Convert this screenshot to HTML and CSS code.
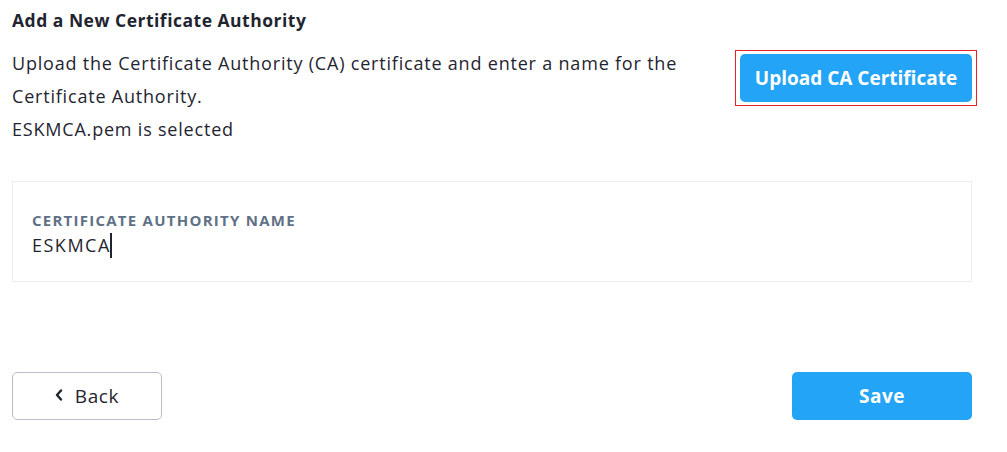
FILE: index.html
```html
<!DOCTYPE html>
<html>
<head>
<meta charset="utf-8">
<link rel="stylesheet" href="styles.css">
</head>
<body>
<div class="page">
  <h1 class="title">Add a New Certificate Authority</h1>
  <div class="intro">
    <div class="intro-text">
      <p>Upload the Certificate Authority (CA) certificate and enter a name for the Certificate Authority.</p>
      <p>ESKMCA.pem is selected</p>
    </div>
    <div class="focus-ring">
      <button class="btn btn-primary upload">Upload CA Certificate</button>
    </div>
  </div>
  <div class="card">
    <label class="field-label">CERTIFICATE AUTHORITY NAME</label>
    <div class="field-value">ESKMCA<span class="caret"></span></div>
  </div>
  <div class="actions">
    <button class="btn btn-back"><svg class="chev" viewBox="0 0 8 12" width="8" height="12"><path d="M6 1.5 L2 6 L6 10.5" fill="none" stroke="#1f2530" stroke-width="2.4" stroke-linecap="round" stroke-linejoin="round"/></svg>Back</button>
    <button class="btn btn-primary save">Save</button>
  </div>
</div>
</body>
</html>
```
FILE: styles.css
```css
* { box-sizing: border-box; }
html, body { margin: 0; padding: 0; background: #fff; }
body {
  font-family: "Open Sans", Lato, "Liberation Sans", sans-serif;
  color: #1f2530;
}
.page {
  width: 960px;
  margin-left: 12px;
  padding-top: 9px;
}
.title {
  margin: 0;
  font-size: 17.5px;
  line-height: 22px;
  font-weight: 700;
  letter-spacing: 0.5px;
}
.intro {
  display: flex;
  justify-content: space-between;
  align-items: flex-start;
  margin-top: 16px;
}
.intro-text {
  width: 690px;
  font-size: 18px;
  line-height: 33px;
  letter-spacing: 0.8px;
}
.intro-text p { margin: 0; }
.focus-ring {
  margin-top: 3px;
  margin-right: -5px;
  border: 1px solid #e8202a;
  padding: 3px 4px;
}
.btn {
  font-family: inherit;
  border-radius: 5px;
  cursor: pointer;
  display: flex;
  align-items: center;
  justify-content: center;
}
.btn-primary {
  background: #23a4f6;
  border: none;
  color: #fff;
  font-weight: 700;
  font-size: 19px;
}
.upload {
  width: 232px;
  height: 48px;
}
.card {
  margin-top: 35px;
  height: 101px;
  border: 1px solid #ededed;
  padding: 28px 19px 0;
}
.field-label {
  display: block;
  font-size: 15px;
  font-weight: 700;
  color: #5f7186;
  line-height: 20px;
  letter-spacing: 1.25px;
}
.field-value {
  font-size: 18px;
  line-height: 26px;
  margin-top: 2px;
  display: flex;
  align-items: center;
  letter-spacing: 1.5px;
}
.caret {
  display: inline-block;
  width: 2px;
  height: 25px;
  background: #1f2530;
  margin-left: -1px;
}
.actions {
  display: flex;
  justify-content: space-between;
  margin-top: 90px;
}
.btn-back {
  width: 150px;
  height: 48px;
  background: #fff;
  border: 1px solid #b9bdcb;
  color: #1f2530;
  font-size: 19px;
  letter-spacing: 0.6px;
  gap: 12px;
}
.chev { margin-top: -2px; }
.save {
  width: 180px;
  height: 48px;
  letter-spacing: 0.5px;
}
```
